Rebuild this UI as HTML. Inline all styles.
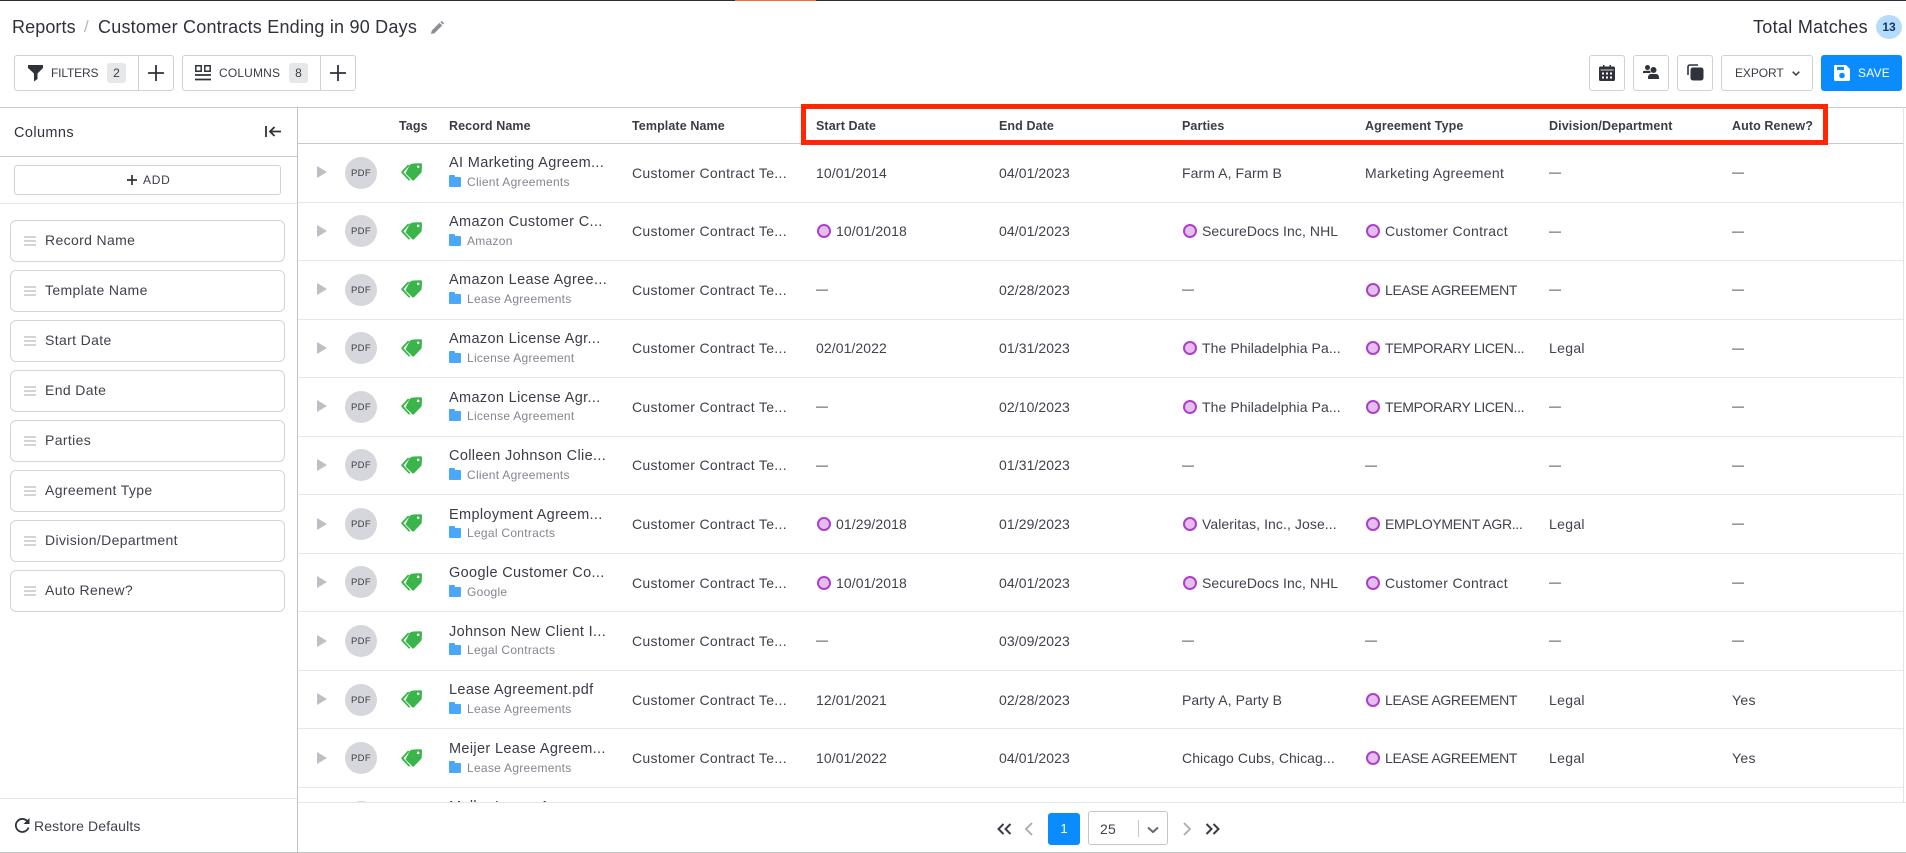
<!DOCTYPE html>
<html><head><meta charset="utf-8"><title>Customer Contracts Ending in 90 Days</title>
<style>
*{box-sizing:border-box}
html,body{margin:0;padding:0;background:#fff}
body{width:1906px;height:853px;position:relative;overflow:hidden;font-family:"Liberation Sans",sans-serif;color:#3a3d46;font-size:14px}
.a{position:absolute;white-space:nowrap}
svg{display:block;overflow:visible}
.btn{position:absolute;border:1px solid #cfd1d4;border-radius:3px;background:#fff}
.hd{position:absolute;top:118px;font-size:12.500px;font-weight:bold;color:#3a3d46;letter-spacing:.1px;line-height:16px;white-space:nowrap}
.li{position:absolute;left:10px;width:275px;height:42px;border:1px solid #d4d5d8;border-radius:6px}
.li i{position:absolute;left:13px;top:15px;width:12px;height:10px;border-top:2px solid #d3d4d7;border-bottom:2px solid #d3d4d7}
.li i:after{content:"";position:absolute;left:0;right:0;top:2px;height:2px;background:#d3d4d7}
.li b{position:absolute;left:34px;top:9px;font-weight:normal;font-size:14px;letter-spacing:.36px;line-height:20px;color:#3f424b;white-space:nowrap}
#tb{position:absolute;left:298px;top:144px;width:1605px;height:658px;overflow:hidden}
.r{position:absolute;left:0;width:1605px;height:58.55px;border-bottom:1px solid #e6e7ea}
.r>*{position:absolute}
.tri{left:19px;top:22.300px;width:0;height:0;border-left:10px solid #bcbfc6;border-top:6px solid transparent;border-bottom:6px solid transparent}
.pdf{left:47px;top:12.600px;width:32px;height:32px;border-radius:50%;background:#d6d7dc;color:#3a3d46;font-size:9.500px;line-height:33px;text-align:center;letter-spacing:.3px}
.tg{left:103px;top:19px}
.n{left:151px;top:9.400px;font-size:14.500px;letter-spacing:.35px;line-height:20px;color:#3a3d46;white-space:nowrap}
.f{left:151px;top:33px;width:12px;height:10px;background:#4aa8fb;border-radius:1px}
.f:before{content:"";position:absolute;left:0;top:-2px;width:6px;height:3px;background:#4aa8fb;border-radius:1px 1px 0 0}
.s{left:169px;top:30px;font-size:12px;letter-spacing:.28px;line-height:16px;color:#83868f;white-space:nowrap}
.c{top:18.700px;font-size:14px;letter-spacing:.32px;line-height:20px;color:#3f424b;white-space:nowrap}
.c2{left:334px}.c3{left:518px}.c4{left:701px}.c5{left:884px}.c6{left:1067px}.c7{left:1251px}.c8{left:1434px}
.c3,.c4{letter-spacing:.08px}
.c5{letter-spacing:.08px}
.u{letter-spacing:-.32px}
.c.m{font-size:12px;letter-spacing:0;top:18px;color:#2f323a}
.d{display:inline-block;width:14px;height:14px;border:2px solid #ab41c9;background:#e7bdf0;border-radius:50%;vertical-align:-2px;margin:0 5px 0 1px}
</style></head><body>
<!-- top line -->
<div class="a" style="left:0;top:0;width:1906px;height:1px;background:#2b2f38"></div>
<div class="a" style="left:735px;top:0;width:81px;height:1px;background:#ff6a22"></div>

<!-- breadcrumbs -->
<div class="a" style="left:12px;top:16px;font-size:18px;line-height:22px;letter-spacing:.1px;color:#2f323a">Reports</div>
<div class="a" style="left:84px;top:16px;font-size:17px;line-height:22px;color:#b5b7bc">/</div>
<div class="a" style="left:98px;top:16px;font-size:18px;line-height:22px;letter-spacing:.22px;color:#2f323a">Customer Contracts Ending in 90 Days</div>
<svg class="a" style="left:431px;top:21px" width="13" height="13" viewBox="0 0 13 13"><path d="M0 13 L0.8 9.500 L8.500 1.800 L11.200 4.500 L3.500 12.200Z M9.400 1 L10.200 .3 Q10.700 0 11.200 .3 L12.700 1.800 Q13 2.300 12.700 2.800 L12 3.600Z" fill="#8c8f96"/></svg>

<div class="a" style="left:1753px;top:16px;font-size:18px;line-height:22px;letter-spacing:.3px;color:#2b2e36">Total Matches</div>
<div class="a" style="left:1876px;top:15px;width:26px;height:24px;border-radius:50%;background:#b5dcfd;color:#123a66;font-size:12px;line-height:24px;text-align:center;font-weight:bold">13</div>

<!-- filters -->
<div class="btn" style="left:14px;top:55px;width:160px;height:36px"></div>
<div class="a" style="left:138px;top:55px;width:1px;height:36px;background:#cfd1d4"></div>
<svg class="a" style="left:28px;top:65px" width="15" height="16" viewBox="0 0 15 16"><path d="M0 0H15V3L9.500 8.500V14L6 16.500V8.500L0 3Z" fill="#2f323a"/></svg>
<div class="a" style="left:51px;top:65px;font-size:12px;line-height:17px;letter-spacing:-.15px;color:#3a3d46">FILTERS</div>
<div class="a" style="left:107px;top:63px;width:19px;height:20px;background:#e6e7e9;border-radius:3px;font-size:12px;line-height:20px;text-align:center;color:#3a3d46">2</div>
<svg class="a" style="left:148px;top:65px" width="16" height="16" viewBox="0 0 16 16"><path d="M8 0V16M0 8H16" stroke="#2f323a" stroke-width="1.800"/></svg>

<!-- columns -->
<div class="btn" style="left:182px;top:55px;width:174px;height:36px"></div>
<div class="a" style="left:320px;top:55px;width:1px;height:36px;background:#cfd1d4"></div>
<svg class="a" style="left:195px;top:65px" width="16" height="16" viewBox="0 0 16 16"><path d="M.8.8H6.200V6.200H.8ZM9.800.8H15.200V6.200H9.800Z" fill="none" stroke="#2f323a" stroke-width="1.500"/><path d="M0 10H16M0 14.500H16" stroke="#2f323a" stroke-width="1.800"/></svg>
<div class="a" style="left:219px;top:65px;font-size:12px;line-height:17px;letter-spacing:.17px;color:#3a3d46">COLUMNS</div>
<div class="a" style="left:289px;top:63px;width:19px;height:20px;background:#e6e7e9;border-radius:3px;font-size:12px;line-height:20px;text-align:center;color:#3a3d46">8</div>
<svg class="a" style="left:330px;top:65px" width="16" height="16" viewBox="0 0 16 16"><path d="M8 0V16M0 8H16" stroke="#2f323a" stroke-width="1.800"/></svg>

<!-- right buttons -->
<div class="btn" style="left:1589px;top:55px;width:36px;height:36px"></div>
<svg class="a" style="left:1599px;top:65px" width="16" height="16" viewBox="0 0 16 16"><path d="M1.500 1.500H4V0H5.500V1.500H10.500V0H12V1.500H14.500Q16 1.500 16 3V14.500Q16 16 14.500 16H1.500Q0 16 0 14.500V3Q0 1.500 1.500 1.500Z" fill="#2f323a"/><path d="M1.500 5H14.500" stroke="#fff" stroke-width=".8"/><path d="M3 7.500h2v2h-2zM7 7.500h2v2h-2zM11 7.500h2v2h-2zM3 11.500h2v2h-2zM7 11.500h2v2h-2zM11 11.500h2v2h-2z" fill="#fff"/></svg>
<div class="btn" style="left:1633px;top:55px;width:36px;height:36px"></div>
<svg class="a" style="left:1643px;top:65px" width="16" height="15" viewBox="0 0 16 15"><circle cx="4.500" cy="2.500" r="2.500" fill="#2f323a"/><path d="M0 7Q0 5.800 2 5.800H6.500Q7.500 5.800 7.500 7V8H0Z" fill="#2f323a"/><circle cx="10.500" cy="5" r="3" fill="#2f323a"/><path d="M5 14V13Q5 9 8 9H13Q16 9 16 13V14Z" fill="#2f323a"/></svg>
<div class="btn" style="left:1677px;top:55px;width:36px;height:36px"></div>
<svg class="a" style="left:1687px;top:64px" width="17" height="17" viewBox="0 0 17 17"><rect x="3.500" y="3.500" width="13" height="13" rx="2.500" fill="#2f323a"/><path d="M1 11V3Q1 1 3 1H11" fill="none" stroke="#2f323a" stroke-width="1.600"/></svg>
<div class="btn" style="left:1721px;top:55px;width:92px;height:36px"></div>
<div class="a" style="left:1735px;top:65px;font-size:12px;line-height:17px;letter-spacing:-.08px;color:#3a3d46">EXPORT</div>
<svg class="a" style="left:1792px;top:71px" width="8" height="5" viewBox="0 0 8 5"><path d="M.7.7L4 4 7.300.7" fill="none" stroke="#3a3d46" stroke-width="1.500"/></svg>
<div class="a" style="left:1821px;top:55px;width:81px;height:36px;background:#0a8cff;border-radius:3px"></div>
<svg class="a" style="left:1834px;top:65px" width="16" height="16" viewBox="0 0 16 16"><path d="M1.500 0H12L16 4V14.500Q16 16 14.500 16H1.500Q0 16 0 14.500V1.500Q0 0 1.500 0Z" fill="#fff"/><rect x="3" y="2" width="7" height="3" fill="#0a8cff"/><circle cx="8" cy="10.500" r="2.800" fill="#0a8cff"/></svg>
<div class="a" style="left:1858px;top:65px;font-size:12px;line-height:17px;letter-spacing:.2px;color:#fff">SAVE</div>

<!-- layout lines -->
<div class="a" style="left:0;top:107px;width:1906px;height:1px;background:#c8c9cd"></div>
<div class="a" style="left:297px;top:107px;width:1px;height:746px;background:#c0c1c5"></div>
<div class="a" style="left:298px;top:143px;width:1606px;height:1px;background:#c8c9cd"></div>
<div class="a" style="left:1903px;top:107px;width:1px;height:695px;background:#e3e4e6"></div>
<div class="a" style="left:0;top:852px;width:1906px;height:1px;background:#c0c1c5"></div>

<!-- sidebar -->
<div class="a" style="left:14px;top:123px;font-size:14.500px;line-height:20px;letter-spacing:.4px;color:#2f323a">Columns</div>
<svg class="a" style="left:265px;top:126px" width="16" height="11" viewBox="0 0 16 11"><path d="M1 0V11" stroke="#2f323a" stroke-width="1.800"/><path d="M16 5.500H5M9.500 1L5 5.500 9.500 10" fill="none" stroke="#2f323a" stroke-width="1.800"/></svg>
<div class="a" style="left:0;top:156px;width:297px;height:1px;background:#c8c9cd"></div>
<div class="btn" style="left:14px;top:165px;width:267px;height:30px"></div>
<svg class="a" style="left:127px;top:175px" width="10" height="10" viewBox="0 0 10 10"><path d="M5 0V10M0 5H10" stroke="#2f323a" stroke-width="1.700"/></svg>
<div class="a" style="left:143px;top:172px;font-size:12px;line-height:17px;letter-spacing:.7px;color:#3a3d46">ADD</div>
<div class="a" style="left:0;top:203px;width:297px;height:1px;background:#e6e7ea"></div>
<div class="li" style="top:220px"><i></i><b>Record Name</b></div>
<div class="li" style="top:270px"><i></i><b>Template Name</b></div>
<div class="li" style="top:320px"><i></i><b>Start Date</b></div>
<div class="li" style="top:370px"><i></i><b>End Date</b></div>
<div class="li" style="top:420px"><i></i><b>Parties</b></div>
<div class="li" style="top:470px"><i></i><b>Agreement Type</b></div>
<div class="li" style="top:520px"><i></i><b>Division/Department</b></div>
<div class="li" style="top:570px"><i></i><b>Auto Renew?</b></div>
<div class="a" style="left:0;top:798px;width:297px;height:1px;background:#e6e7ea"></div>
<svg class="a" style="left:14px;top:818px" width="16" height="16" viewBox="0 0 16 16"><path d="M13.500 3.500A6.500 6.500 0 1 0 14.500 9.500" fill="none" stroke="#2f323a" stroke-width="1.800"/><path d="M15.500 0V6H9.500Z" fill="#2f323a"/></svg>
<div class="a" style="left:34px;top:816px;font-size:14px;line-height:20px;letter-spacing:.14px;color:#3f424b">Restore Defaults</div>

<!-- header -->
<div class="hd" style="left:399px">Tags</div>
<div class="hd" style="left:449px">Record Name</div>
<div class="hd" style="left:632px">Template Name</div>
<div class="hd" style="left:816px">Start Date</div>
<div class="hd" style="left:999px">End Date</div>
<div class="hd" style="left:1182px">Parties</div>
<div class="hd" style="left:1365px">Agreement Type</div>
<div class="hd" style="left:1549px">Division/Department</div>
<div class="hd" style="left:1732px">Auto Renew?</div>

<svg width="0" height="0" style="position:absolute"><defs>
<symbol id="tag" viewBox="0 0 21 18"><path d="M9 1.500L12 .5 19.500 .3Q21 .3 21 2L20.700 8.500Q20.600 9.500 19.800 10.300L13 17.300Q12.200 18 11.300 17.300L5 11Q4.300 10.200 5 9.300Z" fill="#39b54a"/><circle cx="17.200" cy="3.800" r="1.300" fill="#fff"/><path d="M7 1.500L.5 8.500Q0 9.300.5 10L8 17.800L9.300 16.800L2.500 9.300L8.500 2.500Z" fill="#39b54a"/></symbol>
</defs></svg>

<div id="tb">
<div class="r" style="top:0"><div class="tri"></div><div class="pdf">PDF</div><svg class="tg" width="21" height="18"><use href="#tag"/></svg><div class="n">AI Marketing Agreem...</div><div class="f"></div><div class="s">Client Agreements</div><div class="c c2">Customer Contract Te...</div><div class="c c3">10/01/2014</div><div class="c c4">04/01/2023</div><div class="c c5">Farm A, Farm B</div><div class="c c6">Marketing Agreement</div><div class="c c7 m">—</div><div class="c c8 m">—</div></div>

<div class="r" style="top:58.550px"><div class="tri"></div><div class="pdf">PDF</div><svg class="tg" width="21" height="18"><use href="#tag"/></svg><div class="n">Amazon Customer C...</div><div class="f"></div><div class="s">Amazon</div><div class="c c2">Customer Contract Te...</div><div class="c c3"><span class="d"></span>10/01/2018</div><div class="c c4">04/01/2023</div><div class="c c5"><span class="d"></span>SecureDocs Inc, NHL</div><div class="c c6"><span class="d"></span>Customer Contract</div><div class="c c7 m">—</div><div class="c c8 m">—</div></div>

<div class="r" style="top:117.100px"><div class="tri"></div><div class="pdf">PDF</div><svg class="tg" width="21" height="18"><use href="#tag"/></svg><div class="n">Amazon Lease Agree...</div><div class="f"></div><div class="s">Lease Agreements</div><div class="c c2">Customer Contract Te...</div><div class="c c3 m">—</div><div class="c c4">02/28/2023</div><div class="c c5 m">—</div><div class="c c6 u"><span class="d"></span>LEASE AGREEMENT</div><div class="c c7 m">—</div><div class="c c8 m">—</div></div>

<div class="r" style="top:175.650px"><div class="tri"></div><div class="pdf">PDF</div><svg class="tg" width="21" height="18"><use href="#tag"/></svg><div class="n">Amazon License Agr...</div><div class="f"></div><div class="s">License Agreement</div><div class="c c2">Customer Contract Te...</div><div class="c c3">02/01/2022</div><div class="c c4">01/31/2023</div><div class="c c5"><span class="d"></span>The Philadelphia Pa...</div><div class="c c6 u"><span class="d"></span>TEMPORARY LICEN...</div><div class="c c7">Legal</div><div class="c c8 m">—</div></div>

<div class="r" style="top:234.200px"><div class="tri"></div><div class="pdf">PDF</div><svg class="tg" width="21" height="18"><use href="#tag"/></svg><div class="n">Amazon License Agr...</div><div class="f"></div><div class="s">License Agreement</div><div class="c c2">Customer Contract Te...</div><div class="c c3 m">—</div><div class="c c4">02/10/2023</div><div class="c c5"><span class="d"></span>The Philadelphia Pa...</div><div class="c c6 u"><span class="d"></span>TEMPORARY LICEN...</div><div class="c c7 m">—</div><div class="c c8 m">—</div></div>

<div class="r" style="top:292.750px"><div class="tri"></div><div class="pdf">PDF</div><svg class="tg" width="21" height="18"><use href="#tag"/></svg><div class="n">Colleen Johnson Clie...</div><div class="f"></div><div class="s">Client Agreements</div><div class="c c2">Customer Contract Te...</div><div class="c c3 m">—</div><div class="c c4">01/31/2023</div><div class="c c5 m">—</div><div class="c c6 m">—</div><div class="c c7 m">—</div><div class="c c8 m">—</div></div>

<div class="r" style="top:351.300px"><div class="tri"></div><div class="pdf">PDF</div><svg class="tg" width="21" height="18"><use href="#tag"/></svg><div class="n">Employment Agreem...</div><div class="f"></div><div class="s">Legal Contracts</div><div class="c c2">Customer Contract Te...</div><div class="c c3"><span class="d"></span>01/29/2018</div><div class="c c4">01/29/2023</div><div class="c c5"><span class="d"></span>Valeritas, Inc., Jose...</div><div class="c c6 u"><span class="d"></span>EMPLOYMENT AGR...</div><div class="c c7">Legal</div><div class="c c8 m">—</div></div>

<div class="r" style="top:409.850px"><div class="tri"></div><div class="pdf">PDF</div><svg class="tg" width="21" height="18"><use href="#tag"/></svg><div class="n">Google Customer Co...</div><div class="f"></div><div class="s">Google</div><div class="c c2">Customer Contract Te...</div><div class="c c3"><span class="d"></span>10/01/2018</div><div class="c c4">04/01/2023</div><div class="c c5"><span class="d"></span>SecureDocs Inc, NHL</div><div class="c c6"><span class="d"></span>Customer Contract</div><div class="c c7 m">—</div><div class="c c8 m">—</div></div>

<div class="r" style="top:468.400px"><div class="tri"></div><div class="pdf">PDF</div><svg class="tg" width="21" height="18"><use href="#tag"/></svg><div class="n">Johnson New Client I...</div><div class="f"></div><div class="s">Legal Contracts</div><div class="c c2">Customer Contract Te...</div><div class="c c3 m">—</div><div class="c c4">03/09/2023</div><div class="c c5 m">—</div><div class="c c6 m">—</div><div class="c c7 m">—</div><div class="c c8 m">—</div></div>

<div class="r" style="top:526.950px"><div class="tri"></div><div class="pdf">PDF</div><svg class="tg" width="21" height="18"><use href="#tag"/></svg><div class="n">Lease Agreement.pdf</div><div class="f"></div><div class="s">Lease Agreements</div><div class="c c2">Customer Contract Te...</div><div class="c c3">12/01/2021</div><div class="c c4">02/28/2023</div><div class="c c5">Party A, Party B</div><div class="c c6 u"><span class="d"></span>LEASE AGREEMENT</div><div class="c c7">Legal</div><div class="c c8">Yes</div></div>

<div class="r" style="top:585.500px"><div class="tri"></div><div class="pdf">PDF</div><svg class="tg" width="21" height="18"><use href="#tag"/></svg><div class="n">Meijer Lease Agreem...</div><div class="f"></div><div class="s">Lease Agreements</div><div class="c c2">Customer Contract Te...</div><div class="c c3">10/01/2022</div><div class="c c4">04/01/2023</div><div class="c c5">Chicago Cubs, Chicag...</div><div class="c c6 u"><span class="d"></span>LEASE AGREEMENT</div><div class="c c7">Legal</div><div class="c c8">Yes</div></div>

<div class="r" style="top:644.050px;border:0"><div class="pdf">PDF</div><div class="n">Muller Lease Agreem...</div></div>
</div>

<!-- pagination -->
<div class="a" style="left:298px;top:802px;width:1608px;height:1px;background:#e6e7ea"></div>
<svg class="a" style="left:997px;top:823px" width="15" height="12" viewBox="0 0 15 12"><path d="M6.500 1L1.500 6 6.500 11M13.500 1L8.500 6 13.500 11" fill="none" stroke="#3a3d46" stroke-width="2"/></svg>
<svg class="a" style="left:1024px;top:822px" width="9" height="14" viewBox="0 0 9 14"><path d="M8 1L2 7 8 13" fill="none" stroke="#a9abb1" stroke-width="1.800"/></svg>
<div class="a" style="left:1048px;top:813px;width:32px;height:32px;border-radius:3px;background:#0a8cff;color:#fff;font-size:13px;line-height:32px;text-align:center">1</div>
<div class="a" style="left:1088px;top:811px;width:80px;height:34px;border:1px solid #c3c5ca;border-radius:3px"></div>
<div class="a" style="left:1100px;top:819px;font-size:14px;line-height:20px;letter-spacing:.2px;color:#3f424b">25</div>
<div class="a" style="left:1138px;top:820px;width:1px;height:17px;background:#c3c5ca"></div>
<svg class="a" style="left:1147px;top:826px" width="12" height="8" viewBox="0 0 12 8"><path d="M1 1.500L6 6 11 1.500" fill="none" stroke="#666973" stroke-width="2"/></svg>
<svg class="a" style="left:1183px;top:822px" width="9" height="14" viewBox="0 0 9 14"><path d="M1 1L7 7 1 13" fill="none" stroke="#a9abb1" stroke-width="1.800"/></svg>
<svg class="a" style="left:1205px;top:823px" width="15" height="12" viewBox="0 0 15 12"><path d="M1.500 1L6.500 6 1.500 11M8.500 1L13.500 6 8.500 11" fill="none" stroke="#3a3d46" stroke-width="2"/></svg>

<!-- annotation rectangle -->
<div class="a" style="left:801px;top:104px;width:1027px;height:41px;border:5px solid #ff2600"></div>
</body></html>
